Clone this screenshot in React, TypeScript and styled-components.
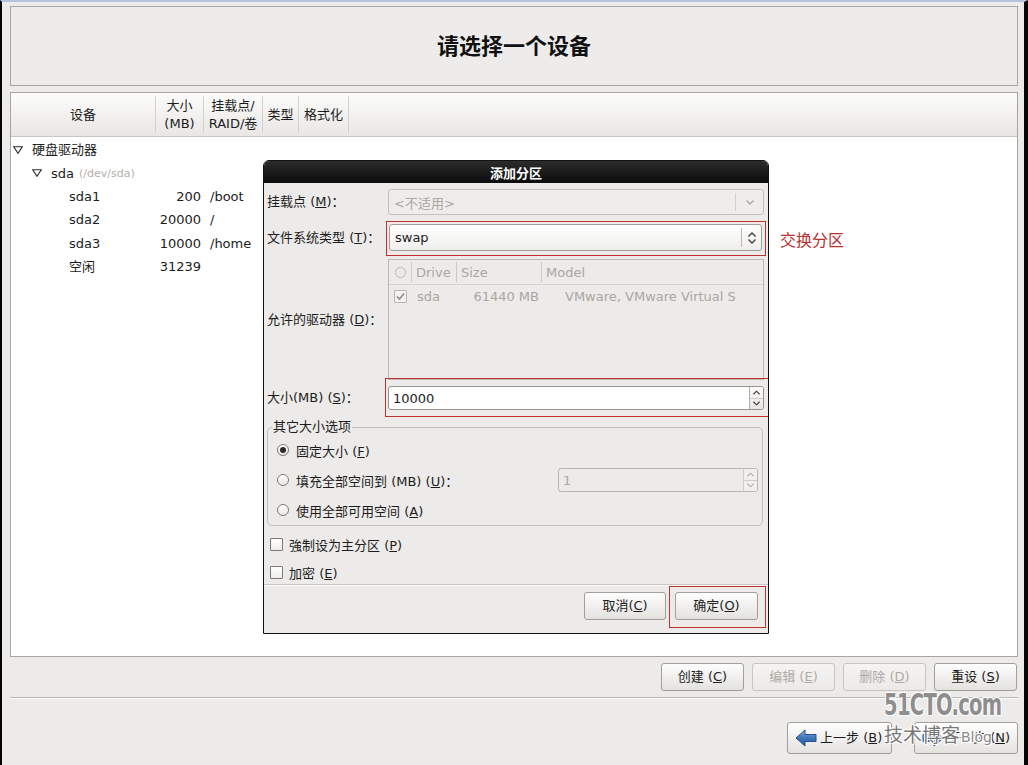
import React from 'react'
import styled, { createGlobalStyle } from 'styled-components'

const GlobalStyle = createGlobalStyle`
    html, body {
        margin: 0;
        padding: 0;
        background: #edebe9;
    }
    body {
        font-family: "DejaVu Sans", "Noto Sans CJK SC", sans-serif;
        font-size: 13px;
        color: #1c1c1c;
    }
    * {
        box-sizing: border-box;
    }
`

const Screen = styled.div`
    position: relative;
    width: 1028px;
    height: 765px;
    overflow: hidden;
    display: flex;
    flex-direction: column;
    background: #edebe9;
    border-top: 2px solid #b7c2da;
    border-left: 2px solid #050505;
    border-right: 4px solid #050505;
    padding: 4px 6px 11px 8px;
`

const TitleBox = styled.div`
    height: 80px;
    flex: none;
    display: flex;
    align-items: center;
    justify-content: center;
    padding-bottom: 4px;
    border: 1px solid #a9a5a0;
    background: #edecea;
    font-family: "Noto Sans CJK SC", sans-serif;
    font-size: 22px;
    font-weight: bold;
    line-height: 28px;
    color: #111;
`

const Panel = styled.div`
    flex: 1;
    margin-top: 6px;
    display: flex;
    flex-direction: column;
    border: 1px solid #a9a5a0;
    background: #fff;
`

const HeaderRow = styled.div`
    display: flex;
    height: 44px;
    flex: none;
    background: linear-gradient(#fcfcfb, #e9e7e4);
    border-bottom: 1px solid #c9c5c0;
`

const HeaderCell = styled.div<{ $w: number }>`
    width: ${({ $w }) => $w}px;
    margin: 3px 0;
    display: flex;
    flex-direction: column;
    align-items: center;
    justify-content: center;
    border-right: 1px solid #d4d0cb;
    line-height: 18px;
`

const TreeBody = styled.div`
    padding-top: 1px;
`

const TreeRow = styled.div`
    display: grid;
    grid-template-columns: 145px 48px 1fr;
    height: 23.4px;
    align-items: center;
    line-height: 23px;
`

const NameCell = styled.div<{ $indent: number }>`
    display: flex;
    align-items: center;
    padding-left: ${({ $indent }) => $indent}px;
    white-space: nowrap;
`

const Expander = styled.svg`
    width: 10px;
    height: 8px;
    margin-right: 9px;
    flex: none;
`

const Hint = styled.span`
    margin-left: 5px;
    font-size: 11px;
    color: #b4b0ac;
`

const SizeCell = styled.div`
    text-align: right;
    padding-right: 3px;
`

const MountCell = styled.div`
    padding-left: 6px;
`

const ActionRow = styled.div`
    display: flex;
    justify-content: flex-end;
    gap: 8px;
    margin-top: 6px;
    padding-right: 1px;
    flex: none;
`

const Button = styled.button<{ $w: number; $h?: number; $disabled?: boolean }>`
    width: ${({ $w }) => $w}px;
    height: ${({ $h }) => $h ?? 28}px;
    padding: 0;
    display: inline-flex;
    align-items: center;
    justify-content: center;
    border: 1px solid ${({ $disabled }) => ($disabled ? '#c8c4bf' : '#a29e99')};
    border-radius: 3px;
    background: ${({ $disabled }) =>
        $disabled
            ? 'linear-gradient(#f5f4f3, #eceae8)'
            : 'linear-gradient(#fefefe, #e4e2df)'};
    color: ${({ $disabled }) => ($disabled ? '#aeaaa5' : '#1c1c1c')};
    font-family: "DejaVu Sans", "Noto Sans CJK SC", sans-serif;
    font-size: 13px;
    line-height: 16px;
`

const NavButton = styled(Button)`
    justify-content: flex-start;
    padding-left: 7px;
    gap: 3px;
`

const Separator = styled.div`
    height: 2px;
    flex: none;
    margin-top: 6px;
    border-top: 1px solid #bcb8b3;
    border-bottom: 1px solid #fbfbfa;
`

const NavRow = styled.div`
    display: flex;
    justify-content: flex-end;
    gap: 22px;
    margin-top: 23px;
    flex: none;
`

const Dialog = styled.div`
    position: absolute;
    left: 261px;
    top: 158px;
    width: 506px;
    height: 474px;
    display: flex;
    flex-direction: column;
    border: 1px solid #111;
    border-radius: 6px 6px 0 0;
    overflow: hidden;
    background: #edebe9;
`

const DialogTitle = styled.div`
    height: 22px;
    flex: none;
    display: flex;
    align-items: center;
    justify-content: center;
    background: linear-gradient(#2c2c2c, #0b0b0b);
    color: #fff;
    font-weight: bold;
    font-family: "Noto Sans CJK SC", sans-serif;
    font-size: 13px;
`

const DialogBody = styled.div`
    flex: 1;
    display: flex;
    flex-direction: column;
    padding: 0 4px 11px 3px;
`

const FormRow = styled.div<{ $mt: number }>`
    display: grid;
    grid-template-columns: 121px 1fr;
    align-items: center;
    margin-top: ${({ $mt }) => $mt}px;
`

const Label = styled.div`
    line-height: 16px;
    white-space: nowrap;
`

const Highlight = styled.div<{ $t: number; $r: number; $b: number; $l: number }>`
    position: relative;
    &::after {
        content: '';
        position: absolute;
        top: -${({ $t }) => $t}px;
        right: -${({ $r }) => $r}px;
        bottom: -${({ $b }) => $b}px;
        left: -${({ $l }) => $l}px;
        border: 1px solid #c0302f;
        pointer-events: none;
    }
`

const Combo = styled.div<{ $disabled?: boolean; $h: number }>`
    height: ${({ $h }) => $h}px;
    display: flex;
    align-items: stretch;
    border: 1px solid ${({ $disabled }) => ($disabled ? '#c4c0bb' : '#a19d98')};
    border-radius: 3px;
    background: ${({ $disabled }) =>
        $disabled ? '#eeedeb' : 'linear-gradient(#ffffff, #efeeec)'};
    color: ${({ $disabled }) => ($disabled ? '#aaa6a1' : '#1c1c1c')};
`

const ComboText = styled.div`
    flex: 1;
    display: flex;
    align-items: center;
    padding-left: 5px;
`

const ComboArrow = styled.div<{ $w: number; $light?: boolean }>`
    width: ${({ $w }) => $w}px;
    margin: 3px 0;
    display: flex;
    flex-direction: column;
    gap: 2px;
    align-items: center;
    justify-content: center;
    border-left: 1px solid ${({ $light }) => ($light ? '#d4d0cb' : '#bbb7b2')};
`

const DriveList = styled.div`
    height: 121px;
    border: 1px solid #bdb9b4;
    background: #edebe9;
    color: #aaa6a1;
`

const DriveGrid = styled.div<{ $h: number; $line?: boolean }>`
    display: grid;
    grid-template-columns: 22px 45px 85px 1fr;
    height: ${({ $h }) => $h}px;
    align-items: stretch;
    border-bottom: ${({ $line }) => ($line ? '1px solid #d6d2cd' : 'none')};
`

const DriveHeadCell = styled.div<{ $sep?: boolean }>`
    display: flex;
    align-items: center;
    justify-content: ${({ $sep }) => ($sep ? 'flex-start' : 'center')};
    padding-left: ${({ $sep }) => ($sep ? 4 : 0)}px;
    margin: 2px 0;
    border-left: ${({ $sep }) => ($sep ? '1px solid #cdc9c4' : 'none')};
`

const DriveCell = styled.div<{ $align?: string; $pl?: number; $pr?: number }>`
    display: flex;
    align-items: center;
    justify-content: ${({ $align }) => $align ?? 'flex-start'};
    padding-left: ${({ $pl }) => $pl ?? 0}px;
    padding-right: ${({ $pr }) => $pr ?? 0}px;
    white-space: nowrap;
    overflow: hidden;
`

const HeadCircle = styled.span`
    width: 11px;
    height: 11px;
    border-radius: 50%;
    border: 1px solid #b9b5b0;
`

const Check = styled.span<{ $disabled?: boolean }>`
    width: 13px;
    height: 13px;
    flex: none;
    display: inline-flex;
    align-items: center;
    justify-content: center;
    border: 1px solid ${({ $disabled }) => ($disabled ? '#b9b5b0' : '#7c7874')};
    border-radius: 1px;
    background: ${({ $disabled }) =>
        $disabled ? '#f3f2f1' : 'linear-gradient(#ffffff, #eeedeb)'};
`

const SpinBox = styled.div<{ $disabled?: boolean; $w?: number }>`
    height: 24px;
    width: ${({ $w }) => ($w ? `${$w}px` : 'auto')};
    margin-left: ${({ $w }) => ($w ? 'auto' : '0')};
    display: flex;
    border: 1px solid ${({ $disabled }) => ($disabled ? '#bbb7b2' : '#96928d')};
    border-radius: 3px;
    background: ${({ $disabled }) => ($disabled ? '#edebe9' : '#fff')};
    color: ${({ $disabled }) => ($disabled ? '#aaa6a1' : '#1c1c1c')};
`

const SpinText = styled.div`
    flex: 1;
    display: flex;
    align-items: center;
    padding-left: 4px;
`

const SpinButtons = styled.div<{ $disabled?: boolean }>`
    width: 14px;
    display: flex;
    flex-direction: column;
    border-left: 1px solid ${({ $disabled }) => ($disabled ? '#d0ccc7' : '#b3afaa')};
    background: ${({ $disabled }) =>
        $disabled ? '#f1f0ee' : 'linear-gradient(#fbfbfa, #e8e6e3)'};
    border-radius: 0 2px 2px 0;
`

const SpinHalf = styled.div<{ $top?: boolean }>`
    flex: 1;
    display: flex;
    align-items: center;
    justify-content: center;
    border-bottom: ${({ $top }) => ($top ? '1px solid #cfcbc6' : 'none')};
`

const Group = styled.fieldset`
    margin: 9px 1px 0 0;
    padding: 0 4px 0 9px;
    border: 1px solid #c3bfba;
    border-radius: 5px;
    min-width: 0;
`

const Legend = styled.legend`
    padding: 0 1px;
    margin-left: -5px;
    line-height: 16px;
`

const OptionRow = styled.div`
    height: 30px;
    display: flex;
    align-items: center;
    gap: 7px;
`

const Radio = styled.span<{ $checked?: boolean }>`
    width: 12px;
    height: 12px;
    flex: none;
    border-radius: 50%;
    border: 1px solid #7c7874;
    background: linear-gradient(#ffffff, #e8e6e3);
    display: inline-flex;
    align-items: center;
    justify-content: center;
    &::after {
        content: '';
        width: 6px;
        height: 6px;
        border-radius: 50%;
        background: ${({ $checked }) => ($checked ? '#2a2a2a' : 'transparent')};
    }
`

const CheckRow = styled.div<{ $mt: number }>`
    height: 24px;
    margin-top: ${({ $mt }) => $mt}px;
    padding-left: 3px;
    display: flex;
    align-items: center;
    gap: 6px;
`

const DialogSeparator = styled.div`
    height: 2px;
    margin: 0 -4px 0 -3px;
    border-top: 1px solid #c8c4bf;
    border-bottom: 1px solid #fbfbfa;
`

const DialogButtons = styled.div`
    display: flex;
    justify-content: flex-end;
    gap: 9px;
    margin-top: 6px;
    padding-right: 6px;
`

const Note = styled.div`
    position: absolute;
    left: 778px;
    top: 227px;
    font-family: "Noto Sans CJK SC", sans-serif;
    font-size: 16px;
    line-height: 20px;
    color: #b8302e;
`

const Watermark = styled.div`
    position: absolute;
    left: 882px;
    top: 684px;
    color: #8e8e8e;
    pointer-events: none;
    text-shadow: 1px 1px 0 #fff, -1px -1px 0 #fff, 1px -1px 0 #fff, -1px 1px 0 #fff;
`

const WaterBrand = styled.div`
    font-family: "DejaVu Sans Condensed", "DejaVu Sans", sans-serif;
    font-weight: bold;
    font-size: 31px;
    line-height: 36px;
    letter-spacing: -1px;
    transform: scaleX(0.7);
    transform-origin: left center;
    white-space: nowrap;
`

const WaterSub = styled.div`
    display: flex;
    align-items: baseline;
    white-space: nowrap;
    font-family: "Noto Sans CJK SC", sans-serif;
    font-size: 19px;
    line-height: 24px;
    color: #787878;
`

const WaterBlog = styled.span`
    font-family: "DejaVu Sans", sans-serif;
    font-size: 14px;
    color: #8a8a8a;
    margin-left: 1px;
`

const Chevron = ({ dir, color = '#3a3a3a', w = 8 }: { dir: 'up' | 'down'; color?: string; w?: number }) => (
    <svg width={w} height={5} viewBox="0 0 8 5">
        <polyline
            points={dir === 'down' ? '0.5,0.5 4,4 7.5,0.5' : '0.5,4.5 4,1 7.5,4.5'}
            fill="none"
            stroke={color}
            strokeWidth="1.3"
        />
    </svg>
)

const Tick = ({ color }: { color: string }) => (
    <svg width="9" height="9" viewBox="0 0 9 9">
        <polyline points="1,4.5 3.5,7 8,1.5" fill="none" stroke={color} strokeWidth="1.6" />
    </svg>
)

const Arrow = ({ dir }: { dir: 'left' | 'right' }) => (
    <svg width="22" height="18" viewBox="0 0 22 18">
        <defs>
            <linearGradient id={`arr-${dir}`} x1="0" y1="0" x2="0" y2="1">
                <stop offset="0" stopColor="#8db4e2" />
                <stop offset="0.5" stopColor="#3f74b8" />
                <stop offset="1" stopColor="#2a5a9c" />
            </linearGradient>
        </defs>
        <polygon
            points={
                dir === 'left'
                    ? '1,9 10,1 10,5.5 21,5.5 21,12.5 10,12.5 10,17'
                    : '21,9 12,1 12,5.5 1,5.5 1,12.5 12,12.5 12,17'
            }
            fill={`url(#arr-${dir})`}
            stroke="#24508e"
            strokeWidth="1"
            strokeLinejoin="round"
        />
    </svg>
)

type TreeItem = {
    level: number
    name: string
    expander?: boolean
    hint?: string
    size?: string
    mount?: string
}

const tree: TreeItem[] = [
    { level: 0, name: '硬盘驱动器', expander: true },
    { level: 1, name: 'sda', hint: '(/dev/sda)', expander: true },
    { level: 2, name: 'sda1', size: '200', mount: '/boot' },
    { level: 2, name: 'sda2', size: '20000', mount: '/' },
    { level: 2, name: 'sda3', size: '10000', mount: '/home' },
    { level: 2, name: '空闲', size: '31239' },
]

const indents = [2, 21, 58]

const App: React.FC = () => {
    return (
        <>
            <GlobalStyle />
            <Screen>
                <TitleBox>请选择一个设备</TitleBox>
                <Panel>
                    <HeaderRow>
                        <HeaderCell $w={145}>设备</HeaderCell>
                        <HeaderCell $w={48}>
                            <span>大小</span>
                            <span>(MB)</span>
                        </HeaderCell>
                        <HeaderCell $w={59}>
                            <span>挂载点/</span>
                            <span>RAID/卷</span>
                        </HeaderCell>
                        <HeaderCell $w={36}>类型</HeaderCell>
                        <HeaderCell $w={50}>格式化</HeaderCell>
                    </HeaderRow>
                    <TreeBody>
                        {tree.map((item) => (
                            <TreeRow key={item.name}>
                                <NameCell $indent={indents[item.level]}>
                                    {item.expander && (
                                        <Expander viewBox="0 0 10 8">
                                            <polygon
                                                points="0.7,0.7 9.3,0.7 5,7.3"
                                                fill="none"
                                                stroke="#2e2e2e"
                                                strokeWidth="1.1"
                                            />
                                        </Expander>
                                    )}
                                    {item.name}
                                    {item.hint && <Hint>{item.hint}</Hint>}
                                </NameCell>
                                <SizeCell>{item.size}</SizeCell>
                                <MountCell>{item.mount}</MountCell>
                            </TreeRow>
                        ))}
                    </TreeBody>
                </Panel>
                <ActionRow>
                    <Button $w={83}>
                        创建 (<u>C</u>)
                    </Button>
                    <Button $w={83} $disabled>
                        编辑 (<u>E</u>)
                    </Button>
                    <Button $w={83} $disabled>
                        删除 (<u>D</u>)
                    </Button>
                    <Button $w={83}>
                        重设 (<u>S</u>)
                    </Button>
                </ActionRow>
                <Separator />
                <NavRow>
                    <NavButton $w={105} $h={32}>
                        <Arrow dir="left" />
                        <span>
                            上一步 (<u>B</u>)
                        </span>
                    </NavButton>
                    <NavButton $w={104} $h={32}>
                        <Arrow dir="right" />
                        <span>
                            下一步 (<u>N</u>)
                        </span>
                    </NavButton>
                </NavRow>

                <Dialog>
                    <DialogTitle>添加分区</DialogTitle>
                    <DialogBody>
                        <FormRow $mt={6}>
                            <Label>
                                挂载点 (<u>M</u>)：
                            </Label>
                            <Combo $disabled $h={26}>
                                <ComboText>&lt;不适用&gt;</ComboText>
                                <ComboArrow $w={28} $light>
                                    <Chevron dir="down" color="#aaa6a1" w={10} />
                                </ComboArrow>
                            </Combo>
                        </FormRow>
                        <FormRow $mt={9}>
                            <Label>
                                文件系统类型 (<u>T</u>)：
                            </Label>
                            <Highlight $t={3} $r={2} $b={5} $l={2}>
                                <Combo $h={27} style={{ margin: '0 2px 0 1px' }}>
                                    <ComboText>swap</ComboText>
                                    <ComboArrow $w={20}>
                                        <Chevron dir="up" />
                                        <Chevron dir="down" />
                                    </ComboArrow>
                                </Combo>
                            </Highlight>
                        </FormRow>
                        <FormRow $mt={8}>
                            <Label>
                                允许的驱动器 (<u>D</u>)：
                            </Label>
                            <DriveList>
                                <DriveGrid $h={25} $line>
                                    <DriveHeadCell>
                                        <HeadCircle />
                                    </DriveHeadCell>
                                    <DriveHeadCell $sep>Drive</DriveHeadCell>
                                    <DriveHeadCell $sep>Size</DriveHeadCell>
                                    <DriveHeadCell $sep>Model</DriveHeadCell>
                                </DriveGrid>
                                <DriveGrid $h={22}>
                                    <DriveCell $align="center">
                                        <Check $disabled>
                                            <Tick color="#8e8a86" />
                                        </Check>
                                    </DriveCell>
                                    <DriveCell $pl={6}>sda</DriveCell>
                                    <DriveCell $align="flex-end" $pr={2}>
                                        61440 MB
                                    </DriveCell>
                                    <DriveCell $pl={24}>VMware, VMware Virtual S</DriveCell>
                                </DriveGrid>
                            </DriveList>
                        </FormRow>
                        <FormRow $mt={6}>
                            <Label>
                                大小(MB) (<u>S</u>)：
                            </Label>
                            <Highlight $t={8} $r={5} $b={7} $l={3}>
                                <SpinBox>
                                    <SpinText>10000</SpinText>
                                    <SpinButtons>
                                        <SpinHalf $top>
                                            <Chevron dir="up" w={7} />
                                        </SpinHalf>
                                        <SpinHalf>
                                            <Chevron dir="down" w={7} />
                                        </SpinHalf>
                                    </SpinButtons>
                                </SpinBox>
                            </Highlight>
                        </FormRow>
                        <Group>
                            <Legend>其它大小选项</Legend>
                            <OptionRow>
                                <Radio $checked />
                                <span>
                                    固定大小 (<u>F</u>)
                                </span>
                            </OptionRow>
                            <OptionRow>
                                <Radio />
                                <span>
                                    填充全部空间到 (MB) (<u>U</u>)：
                                </span>
                                <SpinBox $disabled $w={200}>
                                    <SpinText>1</SpinText>
                                    <SpinButtons $disabled>
                                        <SpinHalf $top>
                                            <Chevron dir="up" w={7} color="#b3afaa" />
                                        </SpinHalf>
                                        <SpinHalf>
                                            <Chevron dir="down" w={7} color="#b3afaa" />
                                        </SpinHalf>
                                    </SpinButtons>
                                </SpinBox>
                            </OptionRow>
                            <OptionRow>
                                <Radio />
                                <span>
                                    使用全部可用空间 (<u>A</u>)
                                </span>
                            </OptionRow>
                        </Group>
                        <CheckRow $mt={6}>
                            <Check />
                            <span>
                                強制设为主分区 (<u>P</u>)
                            </span>
                        </CheckRow>
                        <CheckRow $mt={4}>
                            <Check />
                            <span>
                                加密 (<u>E</u>)
                            </span>
                        </CheckRow>
                        <DialogSeparator />
                        <DialogButtons>
                            <Button $w={82}>
                                取消(<u>C</u>)
                            </Button>
                            <Highlight $t={6} $r={8} $b={8} $l={6}>
                                <Button $w={83}>
                                    确定(<u>O</u>)
                                </Button>
                            </Highlight>
                        </DialogButtons>
                    </DialogBody>
                </Dialog>

                <Note>交换分区</Note>

                <Watermark>
                    <WaterBrand>51CTO.com</WaterBrand>
                    <WaterSub>
                        技术博客<WaterBlog>Blog</WaterBlog>
                    </WaterSub>
                </Watermark>
            </Screen>
        </>
    )
}

export default App
